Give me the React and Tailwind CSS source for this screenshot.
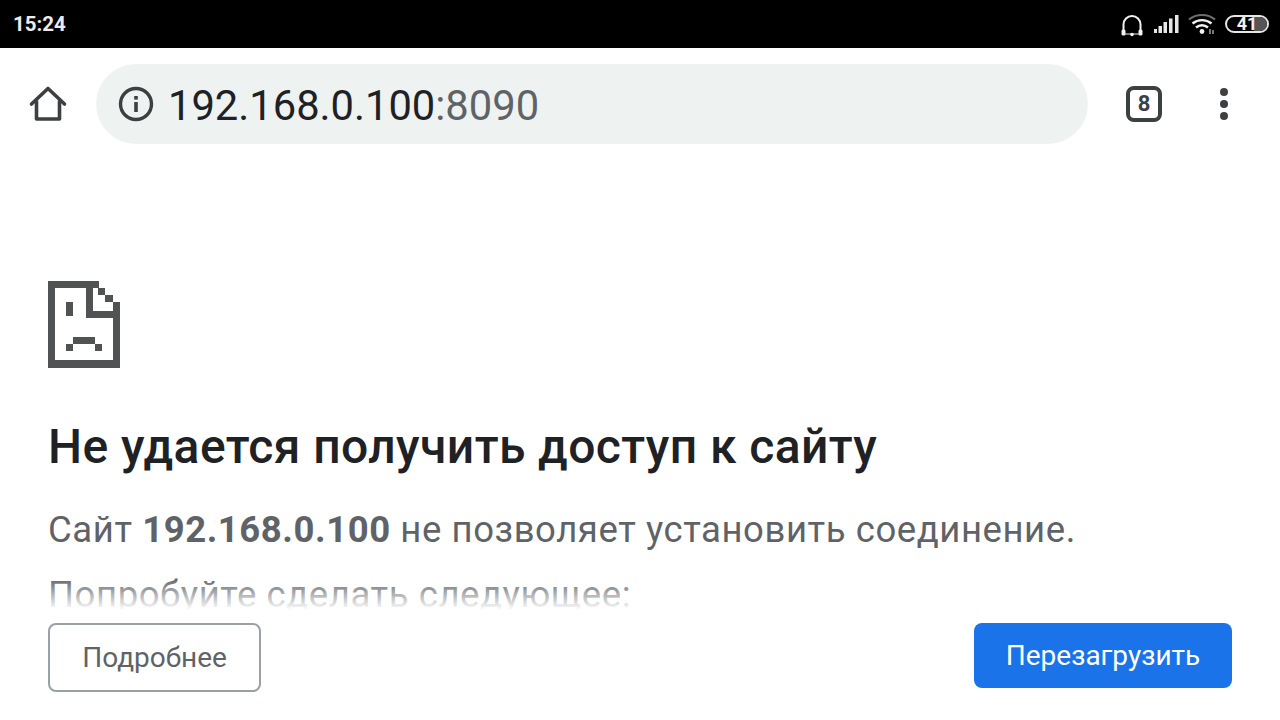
import React from "react";

function Px({ x, y, w, h }) {
  return <rect x={x - 48} y={y - 280} width={w} height={h} fill="#505254" />;
}

function SadFile() {
  return (
    <svg width="72" height="88" viewBox="0 0 72 88" shapeRendering="crispEdges" className="block">
      <Px x={48} y={281} w={51} h={7} />
      <Px x={48} y={281} w={7} h={87} />
      <Px x={48} y={360} w={72} h={8} />
      <Px x={113} y={302} w={7} h={66} />
      <Px x={86} y={288} w={7} h={30} />
      <Px x={86} y={311} w={34} h={7} />
      <Px x={98} y={288} w={7} h={7} />
      <Px x={105} y={295} w={8} h={7} />
      <Px x={113} y={302} w={7} h={7} />
      <Px x={66} y={302} w={7} h={14} />
      <Px x={73} y={337} w={22} h={7} />
      <Px x={66} y={344} w={7} h={7} />
      <Px x={95} y={344} w={7} h={7} />
    </svg>
  );
}

function StatusIcons() {
  return (
    <div className="flex items-center">
      <svg width="24" height="24" viewBox="0 0 24 24" fill="none" className="mr-[10px] mt-[1px]">
        <path d="M3.5 19V11.5a8.5 8.5 0 0 1 17 0V19" stroke="#f2f2f2" strokeWidth="2" />
        <rect x="1.5" y="16.5" width="4" height="6" rx="1.5" fill="#f2f2f2" />
        <rect x="18.5" y="16.5" width="4" height="6" rx="1.5" fill="#f2f2f2" />
        <path d="M5 21h14" stroke="#f2f2f2" strokeWidth="1" />
        <circle cx="12" cy="21.5" r="1.8" fill="#f2f2f2" />
      </svg>
      <svg width="25" height="20" viewBox="2 0 25 20" className="mr-[9px]">
        <rect x="2" y="15" width="3" height="4" fill="#e8e8e8" />
        <rect x="6.5" y="12" width="3.5" height="7" fill="#e8e8e8" />
        <rect x="11.5" y="8" width="3.5" height="11" fill="#e8e8e8" />
        <rect x="17" y="4.5" width="3.5" height="14.5" fill="#e8e8e8" />
        <rect x="23" y="1" width="3.5" height="18" fill="#e8e8e8" />
      </svg>
      <svg width="28" height="22" viewBox="0 0 28 22" fill="none" className="mr-[9px]">
        <path d="M1 6.5C8 0.5 20 0.5 27 6.5" stroke="#6e6e6e" strokeWidth="2.2" />
        <path d="M4.5 10.5C10 6 18 6 23.5 10.5" stroke="#f2f2f2" strokeWidth="2.4" />
        <path d="M8 14.5C11.5 11.5 16.5 11.5 20 14.5" stroke="#f2f2f2" strokeWidth="2.4" />
        <circle cx="14" cy="18.5" r="2.4" fill="#f2f2f2" />
        <path d="M22 16v5M25 17v4" stroke="#a0a0a0" strokeWidth="1.5" />
      </svg>
      <div className="relative mr-[11px] flex h-[18px] w-[44px] items-center justify-center rounded-[9px] border-2 border-[#e6e6e6]">
        <div className="absolute inset-y-0 right-0 w-[13px] rounded-r-[7px] bg-[#555]" />
        <span className="relative font-['Roboto',sans-serif] text-[18px] font-bold leading-[14px] text-[#f2f2f2]">41</span>
      </div>
    </div>
  );
}

export default function App() {
  return (
    <div className="relative flex h-[720px] w-[1280px] flex-col overflow-hidden bg-white font-['Roboto',sans-serif]">
      <div className="flex h-12 shrink-0 items-center justify-between bg-black pl-[13px]">
        <span className="text-[20.5px] font-bold text-[#ececec]">15:24</span>
        <StatusIcons />
      </div>

      <div className="flex h-28 shrink-0 items-center">
        <div className="flex w-[96px] justify-center">
          <svg width="40" height="40" viewBox="0 0 40 40" fill="none">
            <path d="M3.5 20 20 4.5 36.5 20" stroke="#3c4043" strokeWidth="3.6" strokeLinecap="round" strokeLinejoin="round" />
            <path d="M8.5 16.5V35h23V16.5" stroke="#3c4043" strokeWidth="3.6" strokeLinejoin="round" />
          </svg>
        </div>
        <div className="flex h-20 w-[992px] items-center rounded-[40px] bg-[#eef2f1] pl-[22px]">
          <svg width="36" height="36" viewBox="0 0 36 36" fill="none" className="mr-[14px]">
            <circle cx="18" cy="18" r="15.5" stroke="#3c4043" strokeWidth="3.4" />
            <rect x="16.2" y="16" width="3.6" height="10" fill="#3c4043" />
            <rect x="16.2" y="10" width="3.6" height="3.6" fill="#3c4043" />
          </svg>
          <span className="pt-[3px] text-[41.7px] leading-none text-[#202124]">192.168.0.100</span>
          <span className="pt-[3px] text-[41.7px] leading-none text-[#5f6368]">:8090</span>
        </div>
        <div className="ml-[38px] flex h-9 w-9 items-center justify-center rounded-[8px] border-[4px] border-[#3c4043]">
          <span className="text-[22px] font-bold leading-none text-[#3c4043]">8</span>
        </div>
        <div className="ml-[58px] flex flex-col gap-[4px]">
          <div className="h-2 w-2 rounded-full bg-[#3c4043]" />
          <div className="h-2 w-2 rounded-full bg-[#3c4043]" />
          <div className="h-2 w-2 rounded-full bg-[#3c4043]" />
        </div>
      </div>

      <div className="relative min-h-0 flex-1 overflow-hidden pl-12 pt-[120px]">
        <SadFile />
        <h1 className="mt-[49px] whitespace-nowrap text-[48px] font-medium leading-[60px] tracking-[0.41px] text-[#202124]">
          Не удается получить доступ к сайту
        </h1>
        <p className="mt-[23px] whitespace-nowrap text-[36.5px] leading-[60px] tracking-[0.57px] text-[#5f6368]">
          Сайт <b className="font-bold">192.168.0.100</b> не позволяет установить соединение.
        </p>
        <p className="mt-[5px] whitespace-nowrap text-[36.5px] leading-[60px] tracking-[0.57px] text-[#5f6368]">
          Попробуйте сделать следующее:
        </p>
        <div className="absolute inset-x-0 bottom-[110px] h-[32px] bg-gradient-to-b from-white/0 to-white" />
        <div className="absolute inset-x-0 bottom-0 flex h-[110px] items-start justify-between bg-white pl-12 pr-12 pt-[13px]">
          <button className="flex h-[69px] w-[213px] items-center justify-center rounded-[8px] border-2 border-[#9aa0a6] bg-white text-[28px] text-[#5f6368]">
            Подробнее
          </button>
          <button className="flex h-[65px] w-[258px] items-center justify-center rounded-[8px] bg-[#1a73e8] text-[28px] text-white">
            Перезагрузить
          </button>
        </div>
      </div>
    </div>
  );
}
